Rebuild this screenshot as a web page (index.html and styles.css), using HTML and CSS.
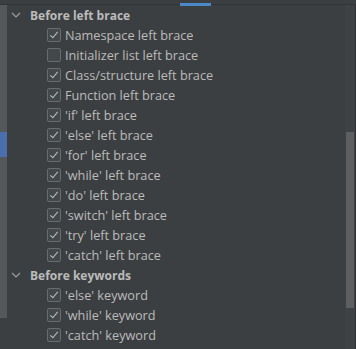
FILE: index.html
```html
<!DOCTYPE html>
<html lang="en">
<head>
    <meta charset="UTF-8">
    <title>Code Style - Spaces</title>
    <link rel="stylesheet" href="styles.css">
</head>
<body>
    <div class="tabs">
        <div class="tab-active"></div>
    </div>
    <div class="panel">
        <div class="strip">
            <div class="strip-sel"></div>
        </div>
        <div class="tree">
            <div class="group">
                <svg class="chevron" width="10" height="6" viewBox="0 0 10 6"><path d="M1 1l4 4 4-4" fill="none" stroke="#9a9c9e" stroke-width="1.2"/></svg>
                <span>Before left brace</span>
            </div>
            <div class="item"><span class="box on"></span>Namespace left brace</div>
            <div class="item"><span class="box"></span>Initializer list left brace</div>
            <div class="item"><span class="box on"></span>Class/structure left brace</div>
            <div class="item"><span class="box on"></span>Function left brace</div>
            <div class="item"><span class="box on"></span>'if' left brace</div>
            <div class="item"><span class="box on"></span>'else' left brace</div>
            <div class="item"><span class="box on"></span>'for' left brace</div>
            <div class="item"><span class="box on"></span>'while' left brace</div>
            <div class="item"><span class="box on"></span>'do' left brace</div>
            <div class="item"><span class="box on"></span>'switch' left brace</div>
            <div class="item"><span class="box on"></span>'try' left brace</div>
            <div class="item"><span class="box on"></span>'catch' left brace</div>
            <div class="group">
                <svg class="chevron" width="10" height="6" viewBox="0 0 10 6"><path d="M1 1l4 4 4-4" fill="none" stroke="#9a9c9e" stroke-width="1.2"/></svg>
                <span>Before keywords</span>
            </div>
            <div class="item"><span class="box on"></span>'else' keyword</div>
            <div class="item"><span class="box on"></span>'while' keyword</div>
            <div class="item"><span class="box on"></span>'catch' keyword</div>
        </div>
        <div class="scrollbar">
            <div class="thumb"></div>
        </div>
    </div>
</body>
</html>
```

FILE: styles.css
```css
body {
    margin: 0;
    background-color: #3c3f41;
    font-family: "Open Sans", "Noto Sans", sans-serif;
    font-size: 12.7px;
    color: #bbbbbb;
    width: 356px;
    height: 349px;
    overflow: hidden;
}
.tabs {
    height: 4px;
    border-bottom: 1px solid #323436;
    position: relative;
}
.tab-active {
    position: absolute;
    left: 180px;
    top: 3px;
    width: 31px;
    height: 3px;
    background-color: #4a88c7;
}
.panel {
    display: flex;
    height: 344px;
}
.strip {
    width: 7px;
    height: 313px;
    background-color: #55585b;
    padding-top: 127px;
    box-sizing: border-box;
}
.strip-sel {
    height: 25px;
    background-color: #4b6eaf;
}
.tree {
    flex: 1;
}
.group {
    display: flex;
    align-items: center;
    height: 20px;
    font-size: 12px;
    font-weight: bold;
}
.chevron {
    margin-left: 4px;
    margin-right: 9px;
}
.item {
    display: flex;
    align-items: center;
    height: 20px;
    padding-left: 40px;
}
.box {
    width: 12px;
    height: 12px;
    border: 1px solid #6b6b6b;
    border-radius: 2px;
    background-color: #43494a;
    margin-right: 4px;
    position: relative;
}
.box.on::after {
    content: "";
    position: absolute;
    left: 4px;
    top: 1px;
    width: 3px;
    height: 7px;
    border-right: 1.5px solid #c0c0c0;
    border-bottom: 1.5px solid #c0c0c0;
    transform: rotate(40deg);
}
.scrollbar {
    width: 11px;
    background-color: #3f4244;
    border-right: 1px solid #2f3133;
    padding-top: 127px;
    box-sizing: border-box;
}
.thumb {
    margin-left: 1px;
    width: 8px;
    height: 176px;
    background-color: #5d5f61;
}
```
